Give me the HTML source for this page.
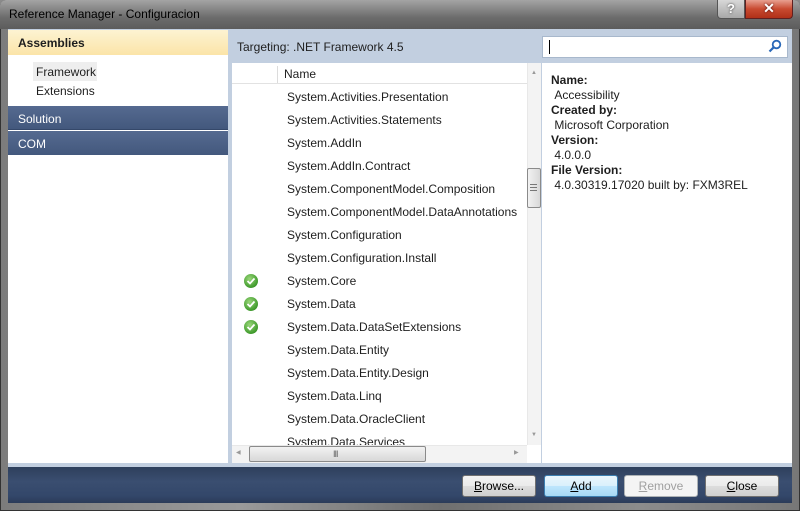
<!DOCTYPE html>
<html><head><meta charset="utf-8"><style>
*{margin:0;padding:0;box-sizing:border-box}
body{width:800px;height:511px;overflow:hidden;font-family:"Liberation Sans",sans-serif;font-size:12px;color:#1e1e1e;position:relative;background:#8a8a8a}
.frame{position:absolute;left:0;top:0;width:800px;height:511px;background:linear-gradient(90deg,#7c7c7c 0%,#9a9a9a 30%,#6f6f6f 55%,#8c8c8c 80%,#777 100%);border:1px solid #333;border-radius:6px 6px 0 0}
.title{position:absolute;left:9px;top:7px;font-size:12px;color:#000}
.tb{position:absolute;left:0;top:0;width:800px;height:29px;background:linear-gradient(180deg,#a4a4a4,#6c6c6c 60%,#5c5c5c);border-radius:6px 6px 0 0}
.abs{position:absolute}
.rowt{position:absolute;left:287px;font-size:12px}
.chk{position:absolute;left:244px;width:14px;height:14px;border-radius:50%;background:radial-gradient(circle at 40% 35%,#9ad77a,#3f9a2c 70%,#2d7a1f);}
.chk svg{position:absolute;left:2px;top:2px}
.btn{position:absolute;top:475px;width:74px;height:22px;border:1px solid #707070;border-radius:3px;background:linear-gradient(#f2f2f2,#ebebeb 50%,#dddddd 50%,#cfcfcf);text-align:center;line-height:20px;font-size:12px;color:#000}
.lbl{font-weight:bold}
</style></head><body>
<div class="frame"></div>
<div class="tb"></div>
<div class="title">Reference Manager - Configuracion</div>
<!-- window buttons -->
<div class="abs" style="left:717px;top:0;width:28px;height:19px;border:1px solid #555;border-top:none;border-radius:0 0 0 4px;background:linear-gradient(#d8d8d8,#a8a8a8);color:#fff;font-weight:bold;text-align:center;font-size:13px;line-height:18px;text-shadow:0 0 2px #333">?</div>
<div class="abs" style="left:745px;top:0;width:48px;height:19px;border:1px solid #602020;border-top:none;border-radius:0 0 4px 0;background:linear-gradient(#e8a090,#c84a30 50%,#b03018);color:#fff;font-weight:bold;text-align:center;font-size:14px;line-height:17px;text-shadow:0 0 2px #400">✕</div>

<!-- content area -->
<div class="abs" style="left:8px;top:29px;width:784px;height:474px;background:#c2cfe0"></div>
<!-- left panel -->
<div class="abs" style="left:8px;top:30px;width:220px;height:433px;background:#fff"></div>
<div class="abs" style="left:8px;top:30px;width:220px;height:25px;background:linear-gradient(#fdf3d2,#fbe4a8)"></div>
<div class="abs lbl" style="left:18px;top:36px">Assemblies</div>
<div class="abs" style="left:33px;top:62px;width:64px;height:19px;background:#eeeeee"></div>
<div class="abs" style="left:36px;top:65px">Framework</div>
<div class="abs" style="left:36px;top:84px">Extensions</div>
<div class="abs" style="left:8px;top:106px;width:220px;height:24px;background:linear-gradient(#556a90,#43587d);border-bottom:1px solid #35486a"></div>
<div class="abs" style="left:18px;top:112px;color:#fff">Solution</div>
<div class="abs" style="left:8px;top:131px;width:220px;height:24px;background:linear-gradient(#556a90,#43587d)"></div>
<div class="abs" style="left:18px;top:137px;color:#fff">COM</div>

<div class="abs" style="left:237px;top:40px;font-size:12px">Targeting: .NET Framework 4.5</div>
<!-- search -->
<div class="abs" style="left:542px;top:36px;width:246px;height:22px;background:#fff;border:1px solid #a8b8cc"></div>
<div class="abs" style="left:549px;top:40px;width:1px;height:14px;background:#000"></div>
<svg class="abs" style="left:768px;top:39px" width="14" height="14" viewBox="0 0 14 14"><circle cx="8.5" cy="5.5" r="3.8" fill="none" stroke="#2a68b8" stroke-width="1.8"/><line x1="5.8" y1="8.2" x2="1.5" y2="12.5" stroke="#2a68b8" stroke-width="2.2"/></svg>

<!-- list -->
<div class="abs" style="left:232px;top:63px;width:309px;height:400px;background:#fff"></div>
<div class="abs" style="left:232px;top:63px;width:295px;height:21px;background:#fff;border-bottom:1px solid #e2e2e2"></div>
<div class="abs" style="left:277px;top:66px;width:1px;height:17px;background:#dcdcdc"></div>
<div class="abs" style="left:284px;top:67px">Name</div>
<div class="rowt" style="top:90px">System.Activities.Presentation</div>
<div class="rowt" style="top:113px">System.Activities.Statements</div>
<div class="rowt" style="top:136px">System.AddIn</div>
<div class="rowt" style="top:159px">System.AddIn.Contract</div>
<div class="rowt" style="top:182px">System.ComponentModel.Composition</div>
<div class="rowt" style="top:205px">System.ComponentModel.DataAnnotations</div>
<div class="rowt" style="top:228px">System.Configuration</div>
<div class="rowt" style="top:251px">System.Configuration.Install</div>
<div class="rowt" style="top:274px">System.Core</div>
<div class="rowt" style="top:297px">System.Data</div>
<div class="rowt" style="top:320px">System.Data.DataSetExtensions</div>
<div class="rowt" style="top:343px">System.Data.Entity</div>
<div class="rowt" style="top:366px">System.Data.Entity.Design</div>
<div class="rowt" style="top:389px">System.Data.Linq</div>
<div class="rowt" style="top:412px">System.Data.OracleClient</div>
<div class="rowt" style="top:435px">System.Data.Services</div>
<div class="chk" style="top:274px"><svg width="10" height="10" viewBox="0 0 10 10"><path d="M1.5 5 L4 7.5 L8.5 2.5" fill="none" stroke="#fff" stroke-width="1.8"/></svg></div>
<div class="chk" style="top:297px"><svg width="10" height="10" viewBox="0 0 10 10"><path d="M1.5 5 L4 7.5 L8.5 2.5" fill="none" stroke="#fff" stroke-width="1.8"/></svg></div>
<div class="chk" style="top:320px"><svg width="10" height="10" viewBox="0 0 10 10"><path d="M1.5 5 L4 7.5 L8.5 2.5" fill="none" stroke="#fff" stroke-width="1.8"/></svg></div>
<!-- vertical scrollbar -->
<div class="abs" style="left:527px;top:63px;width:14px;height:382px;background:#f3f3f3;border-left:1px solid #e8e8e8"></div>
<div class="abs" style="left:531px;top:70px;font-size:6px;color:#999">▲</div>
<div class="abs" style="left:531px;top:432px;font-size:6px;color:#999">▼</div>
<div class="abs" style="left:527px;top:168px;width:14px;height:40px;border:1px solid #8a8a8a;border-radius:2px;background:linear-gradient(90deg,#f2f2f2,#d8d8d8)"></div>
<div class="abs" style="left:530px;top:184px;width:7px;height:7px;border-top:1px solid #777;border-bottom:1px solid #777"><div style="margin-top:2px;border-top:1px solid #777"></div></div>
<!-- horizontal scrollbar -->
<div class="abs" style="left:232px;top:445px;width:295px;height:18px;background:#f3f3f3;border-top:1px solid #e8e8e8"></div>
<div class="abs" style="left:236px;top:449px;font-size:6px;color:#999">◀</div>
<div class="abs" style="left:514px;top:449px;font-size:6px;color:#999">▶</div>
<div class="abs" style="left:249px;top:446px;width:177px;height:16px;border:1px solid #8a8a8a;border-radius:2px;background:linear-gradient(#f2f2f2,#d8d8d8)"></div>
<div class="abs" style="left:333px;top:449px;font-size:9px;color:#666;letter-spacing:-1px">III</div>

<!-- details -->
<div class="abs" style="left:542px;top:63px;width:250px;height:400px;background:#fff"></div>
<div class="abs" style="left:551px;top:73px;line-height:15px">
<div class="lbl">Name:</div><div>&nbsp;Accessibility</div>
<div class="lbl">Created by:</div><div>&nbsp;Microsoft Corporation</div>
<div class="lbl">Version:</div><div>&nbsp;4.0.0.0</div>
<div class="lbl">File Version:</div><div>&nbsp;4.0.30319.17020 built by: FXM3REL</div>
</div>

<!-- bottom -->
<div class="abs" style="left:8px;top:467px;width:784px;height:36px;background:linear-gradient(#2e3f5c,#3a4e70 40%,#33476a 80%,#2b3b58)"></div>
<div class="btn" style="left:462px"><u>B</u>rowse...</div>
<div class="btn" style="left:544px;border-color:#3c7fb1;background:linear-gradient(#eaf6fd,#d9f0fc 50%,#bee6fd 50%,#a7d9f5)"><u>A</u>dd</div>
<div class="btn" style="left:624px;color:#a0a0a0;border-color:#adb2b5;background:#f4f4f4"><u>R</u>emove</div>
<div class="btn" style="left:705px"><u>C</u>lose</div>
</body></html>
